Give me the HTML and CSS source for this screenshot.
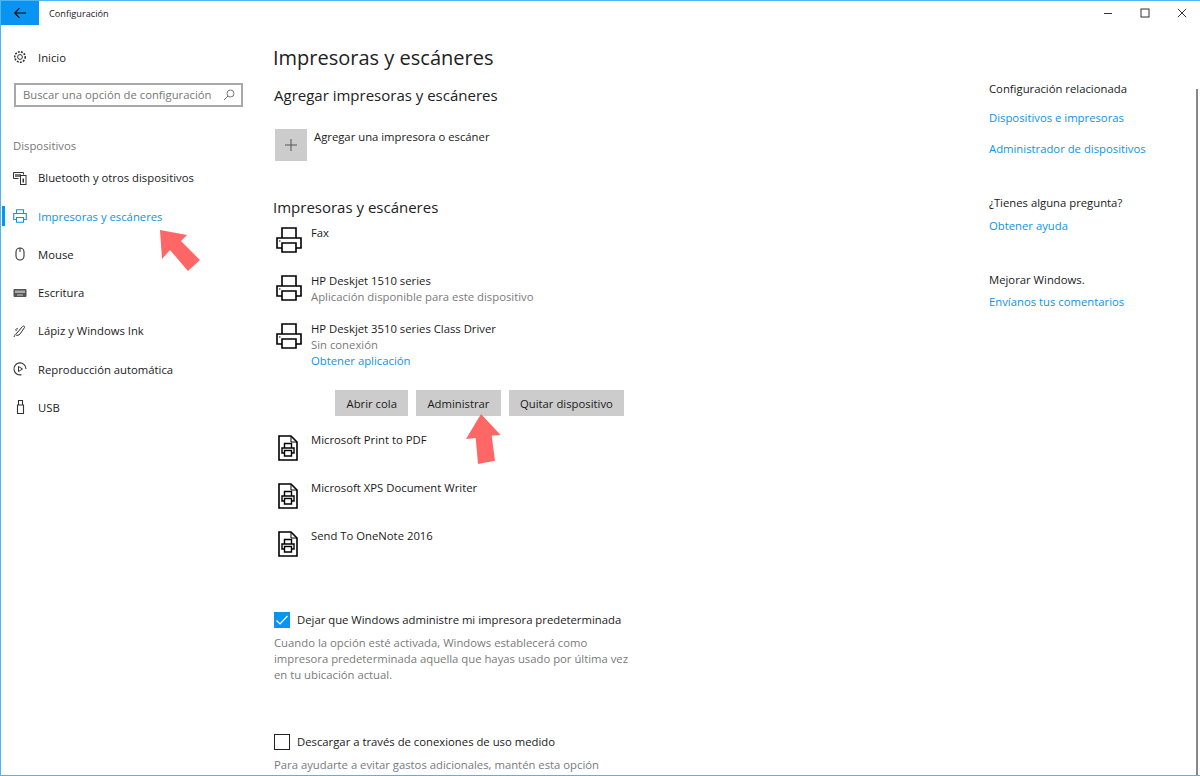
FILE: index.html
```html
<!DOCTYPE html>
<html lang="es">
<head>
    <meta charset="UTF-8">
    <title>Configuración</title>
    <link rel="stylesheet" href="styles.css">
</head>
<body>
    <div class="window">
        <!-- Title bar -->
        <div class="titlebar">
            <div class="back">
                <svg width="14" height="12" viewBox="0 0 14 12"><path d="M13 6H2M6.5 1.2 1.7 6l4.8 4.8" fill="none" stroke="#000" stroke-width="1.1"/></svg>
            </div>
            <div class="app-title">Configuración</div>
            <div class="controls">
                <svg width="10" height="10" viewBox="0 0 10 10"><path d="M1 5.5h8" stroke="#333" stroke-width="1"/></svg>
                <svg width="10" height="10" viewBox="0 0 10 10"><rect x="1" y="1" width="8" height="8" fill="none" stroke="#333" stroke-width="1"/></svg>
                <svg width="10" height="10" viewBox="0 0 10 10"><path d="M.8.8l8.4 8.4M9.2.8.8 9.2" stroke="#333" stroke-width="1"/></svg>
            </div>
        </div>

        <div class="content">
            <!-- Sidebar -->
            <div class="sidebar">
                <div class="nav-item home">
                    <svg class="nav-icon" width="14" height="14" viewBox="0 0 14 14"><circle cx="7" cy="7" r="2.4" fill="none" stroke="#333"/><circle cx="7" cy="7" r="5.2" fill="none" stroke="#333" stroke-width="1.6" stroke-dasharray="1.9 1.2"/></svg>
                    <span>Inicio</span>
                </div>
                <div class="search">
                    <span>Buscar una opción de configuración</span>
                    <svg width="12" height="12" viewBox="0 0 12 12"><circle cx="7.5" cy="4.5" r="3.5" fill="none" stroke="#777"/><path d="M5 7 1 11" stroke="#777"/></svg>
                </div>
                <div class="nav-heading">Dispositivos</div>
                <div class="nav-item">
                    <svg class="nav-icon" width="14" height="14" viewBox="0 0 14 14"><path d="M.5 1.5h10v2M.5 1.5v6h5" fill="none" stroke="#333"/><path d="M2 3h6v3H2z" fill="#777"/><rect x="7.5" y="4.5" width="5.5" height="9" fill="none" stroke="#333"/><path d="M9.500 7.500h1.500v4H9.500z" fill="#333"/></svg>
                    <span>Bluetooth y otros dispositivos</span>
                </div>
                <div class="nav-item active">
                    <svg class="nav-icon" width="14" height="14" viewBox="0 0 14 14"><path d="M3.500 4.500V.7h7v3.800M3.500 10.500H.7V4.500h12.600v6h-2.800M3.500 8.500h7v4.800h-7z" fill="none" stroke="#0d93ec" stroke-width="1.100"/></svg>
                    <span>Impresoras y escáneres</span>
                </div>
                <div class="nav-item">
                    <svg class="nav-icon" width="14" height="14" viewBox="0 0 14 14"><rect x="3" y="1" width="8" height="12" rx="4" fill="none" stroke="#333" stroke-width="1.100"/><path d="M7 1v4" stroke="#333"/></svg>
                    <span>Mouse</span>
                </div>
                <div class="nav-item">
                    <svg class="nav-icon" width="14" height="14" viewBox="0 0 14 14"><rect x=".5" y="3" width="13" height="8" rx="1" fill="#555"/><rect x="2" y="4.500" width="10" height="2.500" fill="#aaa"/><rect x="4" y="8.500" width="6" height="1" fill="#ccc"/></svg>
                    <span>Escritura</span>
                </div>
                <div class="nav-item">
                    <svg class="nav-icon" width="14" height="14" viewBox="0 0 14 14"><path d="M1 13c1-2 1-3 3-4l5-6c1-1.500 3-1 2.500.5L7 10c-1 1.500-3 1.500-4 1M5 5c-2-1-3 1-1.500 2" fill="none" stroke="#333"/></svg>
                    <span>Lápiz y Windows Ink</span>
                </div>
                <div class="nav-item">
                    <svg class="nav-icon" width="14" height="14" viewBox="0 0 14 14"><path d="M8.500 12.700A6 6 0 1 1 13 7" fill="none" stroke="#333" stroke-width="1.100"/><path d="M5.500 4.500v5l4-2.500z" fill="none" stroke="#333"/></svg>
                    <span>Reproducción automática</span>
                </div>
                <div class="nav-item">
                    <svg class="nav-icon" width="14" height="14" viewBox="0 0 14 14"><path d="M4.500 5h6v8.500h-6zM5.500 5V.5h4V5" fill="none" stroke="#333" stroke-width="1.100"/></svg>
                    <span>USB</span>
                </div>
            </div>

            <!-- Main column -->
            <div class="main">
                <h1>Impresoras y escáneres</h1>
                <h2 class="add-heading">Agregar impresoras y escáneres</h2>
                <div class="add-row">
                    <div class="add-tile"><svg width="14" height="14" viewBox="0 0 14 14"><path d="M7 1v12M1 7h12" stroke="#555" stroke-width="1"/></svg></div>
                    <div class="item-name">Agregar una impresora o escáner</div>
                </div>
                <h2 class="list-heading">Impresoras y escáneres</h2>

                <div class="device">
                    <svg class="device-icon" width="26" height="26" viewBox="0 0 26 26"><use href="#printer"/></svg>
                    <div class="item-name">Fax</div>
                </div>
                <div class="device">
                    <svg class="device-icon" width="26" height="26" viewBox="0 0 26 26"><use href="#printer"/></svg>
                    <div>
                        <div class="item-name">HP Deskjet 1510 series</div>
                        <div class="muted">Aplicación disponible para este dispositivo</div>
                    </div>
                </div>
                <div class="device selected">
                    <svg class="device-icon" width="26" height="26" viewBox="0 0 26 26"><use href="#printer"/></svg>
                    <div>
                        <div class="item-name">HP Deskjet 3510 series Class Driver</div>
                        <div class="muted">Sin conexión</div>
                        <a class="link">Obtener aplicación</a>
                    </div>
                </div>
                <div class="device-actions">
                    <button>Abrir cola</button>
                    <button>Administrar</button>
                    <button>Quitar dispositivo</button>
                </div>
                <div class="device doc">
                    <svg class="device-icon" width="20" height="26" viewBox="0 0 20 26"><use href="#docprinter"/></svg>
                    <div class="item-name">Microsoft Print to PDF</div>
                </div>
                <div class="device doc">
                    <svg class="device-icon" width="20" height="26" viewBox="0 0 20 26"><use href="#docprinter"/></svg>
                    <div class="item-name">Microsoft XPS Document Writer</div>
                </div>
                <div class="device doc">
                    <svg class="device-icon" width="20" height="26" viewBox="0 0 20 26"><use href="#docprinter"/></svg>
                    <div class="item-name">Send To OneNote 2016</div>
                </div>

                <div class="option first">
                    <span class="check on"><svg width="16" height="16" viewBox="0 0 16 16"><path d="M2.500 8.500l3.500 3.500 7.500-8" fill="none" stroke="#fff" stroke-width="1.200"/></svg></span>
                    <span class="item-name">Dejar que Windows administre mi impresora predeterminada</span>
                </div>
                <p class="muted option-text">Cuando la opción esté activada, Windows establecerá como<br>impresora predeterminada aquella que hayas usado por última vez<br>en tu ubicación actual.</p>
                <div class="option second">
                    <span class="check"></span>
                    <span class="item-name">Descargar a través de conexiones de uso medido</span>
                </div>
                <p class="muted option-text">Para ayudarte a evitar gastos adicionales, mantén esta opción</p>
            </div>

            <!-- Related links -->
            <div class="related">
                <div class="related-title">Configuración relacionada</div>
                <a class="link">Dispositivos e impresoras</a>
                <a class="link">Administrador de dispositivos</a>
                <div class="related-title gap">¿Tienes alguna pregunta?</div>
                <a class="link">Obtener ayuda</a>
                <div class="related-title gap">Mejorar Windows.</div>
                <a class="link">Envíanos tus comentarios</a>
            </div>
            <div class="scrollbar"></div>
        </div>

        <!-- Red arrows over the screenshot -->
        <svg class="arrow arrow-nav" width="44" height="44" viewBox="0 0 44 44"><path d="M1 0 28 5 22 11 41 30 29 41 11 20 3 29z" fill="#ff6666"/></svg>
        <svg class="arrow arrow-btn" width="37" height="52" viewBox="0 0 37 52"><path d="M16 1 35.600 22 26.700 22.700 30 47.700 13 51 10.700 25 1 26z" fill="#ff6666"/></svg>
    </div>

    <svg class="defs" width="0" height="0">
        <defs>
            <g id="printer" fill="none" stroke="#000" stroke-width="1.600">
                <path d="M6 11V1h14v10M6 21H1V11h24v10h-5"/>
                <path d="M6 16h14v9H6z"/>
                <path d="M3 14h1.500" stroke-width="1.200"/>
            </g>
            <g id="docprinter" fill="none" stroke="#000">
                <path d="M1 1h12l6 6v18H1z" stroke-width="1.600"/>
                <path d="M13 1v6h6" stroke-width="1"/>
                <path d="M6.500 13V8.500h7V13M6.500 18H4v-5h12v5h-2.500M6.500 15.500h7V21h-7z" stroke-width="1.400"/>
            </g>
        </defs>
    </svg>
</body>
</html>
```

FILE: styles.css
```css
* {
    box-sizing: border-box;
}

html, body {
    height: 100%;
    margin: 0;
}

body {
    font-family: "Open Sans", "Noto Sans", Arial, sans-serif;
    font-size: 11.3px;
    color: #1a1a1a;
    background: white;
    overflow: hidden;
}

.defs {
    position: absolute;
}

.window {
    position: relative;
    height: 776px;
    border: 1px solid #4db5f5;
    border-right: none;
    overflow: hidden;
}

/* Title bar */
.titlebar {
    display: flex;
    align-items: center;
    height: 24px;
}

.back {
    width: 38px;
    height: 24px;
    background-color: #0a94f2;
    display: flex;
    align-items: center;
    justify-content: center;
}

.app-title {
    margin-left: 10px;
    font-size: 9.2px;
}

.controls {
    margin-left: auto;
    display: flex;
    gap: 27px;
    padding-right: 13px;
}

.content {
    display: flex;
    height: 750px;
}

/* Sidebar */
.sidebar {
    width: 272px;
    flex-shrink: 0;
}

.nav-item {
    position: relative;
    display: flex;
    align-items: center;
    height: 38.25px;
    padding-left: 12px;
    gap: 11px;
    color: #1a1a1a;
}

.nav-item.home {
    margin-top: 13px;
}

.nav-item.active {
    color: #0d93ec;
}

/* Accent mark on the selected entry */
.nav-item.active::before {
    content: "";
    position: absolute;
    left: 1px;
    top: 9px;
    width: 3px;
    height: 20px;
    background-color: #0a94f2;
}

.search {
    display: flex;
    align-items: center;
    justify-content: space-between;
    margin: 7px 30px 0 13px;
    height: 24px;
    padding: 0 6px 1px 7px;
    border: 2px solid #a8a8a8;
    color: #777;
}

.nav-heading {
    margin: 31px 0 4.5px 12px;
    color: #777;
    line-height: 16px;
}

/* Main column */
.main {
    width: 716px;
    flex-shrink: 0;
}

h1 {
    margin: 20px 0 0;
    font-size: 20px;
    font-weight: 400;
    line-height: 26px;
    color: #222;
}

h2 {
    margin: 0;
    font-size: 15px;
    font-weight: 400;
    line-height: 20px;
    color: #222;
}

.add-heading {
    margin: 14px 0 0 1px;
}

.add-row {
    display: flex;
    margin: 24px 0 0 2px;
    gap: 7px;
}

.add-tile {
    width: 32px;
    height: 32px;
    background-color: #cccccc;
    display: flex;
    align-items: center;
    justify-content: center;
}

.list-heading {
    margin: 36px 0 8px;
}

.item-name {
    line-height: 16px;
}

.muted {
    color: #7a7a7a;
    line-height: 16px;
}

.link {
    display: block;
    color: #0d93ec;
    line-height: 16px;
}

.device {
    display: flex;
    gap: 9px;
    padding-left: 3px;
    height: 48px;
}

.device-icon {
    flex-shrink: 0;
    margin-top: 2px;
}

.device.selected {
    height: 69px;
}

.device.doc {
    padding-left: 5px;
    gap: 13px;
}

.device.doc .device-icon {
    margin-top: 3px;
}

.device-actions {
    display: flex;
    gap: 7.5px;
    margin: 0 0 16px 62px;
}

button {
    height: 26px;
    padding: 0 11.5px;
    font-family: inherit;
    font-size: 11.3px;
    color: #1a1a1a;
    background-color: #cccccc;
    border: none;
}

.option {
    display: flex;
    align-items: center;
    gap: 7px;
    margin-left: 1px;
}

.option.first {
    margin-top: 36px;
}

.option.second {
    margin-top: 51px;
}

.check {
    width: 16px;
    height: 16px;
    border: 1.5px solid #222;
    flex-shrink: 0;
}

.check.on {
    background-color: #0a94f2;
    border: none;
}

.check svg {
    display: block;
}

.option-text {
    margin: 6.5px 0 0 1px;
    line-height: 16.25px;
}

/* Related links */
.related {
    flex-grow: 1;
    padding-top: 55.5px;
}

.related-title {
    line-height: 16px;
    margin-bottom: 13px;
}

.related .link {
    margin-bottom: 15.5px;
}

.related-title.gap {
    margin-top: 38px;
    margin-bottom: 6.5px;
}

.scrollbar {
    position: absolute;
    right: 2px;
    top: 88px;
    bottom: 0;
    width: 2px;
    background-color: #888;
}

/* Arrows */
.arrow {
    position: absolute;
}

.arrow-nav {
    left: 158px;
    top: 229px;
}

.arrow-btn {
    left: 464px;
    top: 412px;
}
```
